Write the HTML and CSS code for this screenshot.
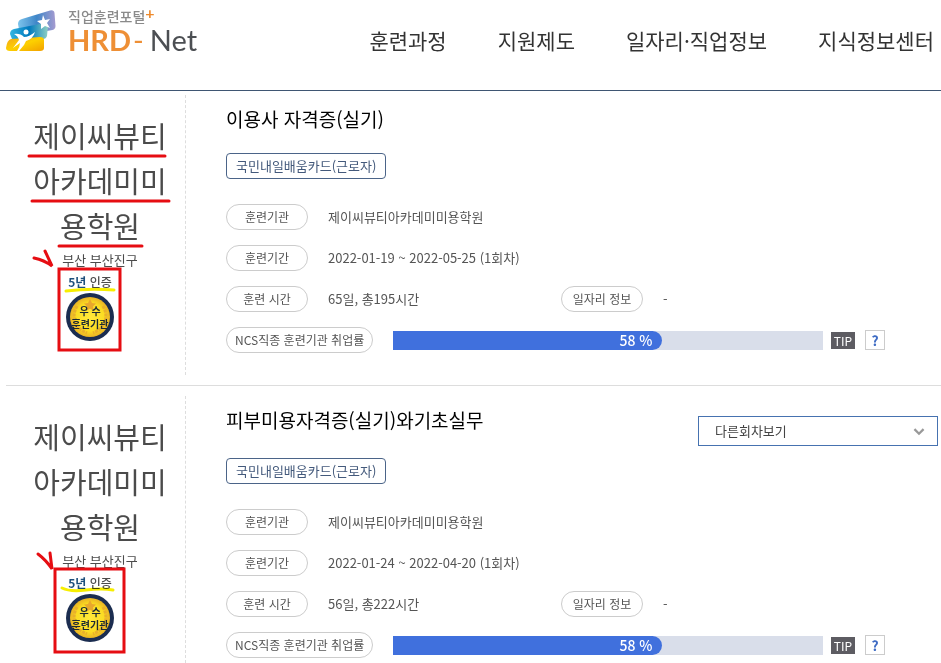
FILE: index.html
```html
<!DOCTYPE html>
<html lang="ko">
<head>
<meta charset="utf-8">
<meta name="viewport" content="width=device-width, initial-scale=1">
<title>직업훈련포털 HRD-Net</title>
<link rel="stylesheet" href="styles.css">
</head>
<body>
<svg class="defs" width="0" height="0" aria-hidden="true">
  <defs>
    <linearGradient id="violet" x1="0" y1="0" x2="1" y2="0"><stop offset="0" stop-color="#7cc4ec"/><stop offset=".5" stop-color="#3f86c8"/><stop offset="1" stop-color="#a59bd0"/></linearGradient>
    <linearGradient id="teal" x1="0" y1="0" x2="1" y2="0"><stop offset="0" stop-color="#35b6e2"/><stop offset=".5" stop-color="#0079bd"/><stop offset="1" stop-color="#8fd0c4"/></linearGradient>
    <linearGradient id="amber" x1="0" y1="0" x2="1" y2="1"><stop offset="0" stop-color="#f3a51c"/><stop offset=".5" stop-color="#fdd000"/><stop offset="1" stop-color="#f2a000"/></linearGradient>
    <radialGradient id="gold"><stop offset="0" stop-color="#ffe93c"/><stop offset=".7" stop-color="#fbdc22"/><stop offset="1" stop-color="#e9b325"/></radialGradient>
    <symbol id="medal" viewBox="0 0 48 48">
      <circle cx="24" cy="24" r="24" fill="#1b2d50"/>
      <circle cx="24" cy="24" r="20" fill="url(#gold)"/>
      <path d="M24 6l2 4 4 .5-3 3 .8 4.200L24 15.800l-3.800 1.900.8-4.200-3-3 4-.5z" fill="#e9a72c"/>
      <g fill="none" stroke="#e8b02c" stroke-width="3" stroke-dasharray="3 1">
        <path d="M11 13C5 23 8 35 21 40"/><path d="M37 13c6 10 3 22-10 27"/>
      </g>
    </symbol>
  </defs>
</svg>

<header class="header">
  <a class="logo" href="#" aria-label="직업훈련포털 HRD-Net">
    <svg class="logo-mark" viewBox="0 0 50 42" aria-hidden="true">
      <path d="M16 9L44 .5q4-1 4.500 2.500l1 13q0 3-3 4L18 25q-4 1-4.500-3L12 14q0-4 4-5z" fill="url(#violet)"/>
      <path d="M8 19l31-6q3 0 3 3l-1 10q-1 3-4 3l-27 4q-4 0-4-4l-2-5q0-4 4-5z" fill="url(#teal)"/>
      <path d="M5 29l29-2q4 0 4 3v8q0 3-4 3H4q-4 0-4-3 1-8 5-9z" fill="url(#amber)"/>
      <path d="M37 5l2 5 5-1-3 4 3 5-5-2-4 3 0-5-4-3 5-1z" fill="#fff"/>
      <path d="M8 24q6-1 10 3 5 0 11-5-2 7-9 9l-2 4-5 6h-2q3-4 3-8l-7 5 6-8q-1-4-5-6z" fill="#fff"/>
      <circle cx="20" cy="22" r="2.500" fill="#fff"/>
    </svg>
    <span class="logo-words">
      <span class="logo-sub">직업훈련포털<b>+</b></span>
      <span class="logo-name"><b>HRD</b><i>-</i><span>Net</span></span>
    </span>
  </a>
  <nav class="nav">
    <a href="#">훈련과정</a>
    <a href="#">지원제도</a>
    <a href="#">일자리·직업정보</a>
    <a href="#">지식정보센터</a>
  </nav>
</header>

<main class="list">
  <article class="item">
    <aside class="school">
      <p class="school-name">제이씨뷰티아카데미미용학원</p>
      <p class="school-area">부산 부산진구</p>
      <div class="cert">
        <p class="cert-years"><b>5년</b> 인증</p>
        <div class="medal"><svg viewBox="0 0 48 48" aria-hidden="true"><use href="#medal"/></svg><span>우 수<br>훈련기관</span></div>
      </div>
      <svg class="marks" width="180" height="268" viewBox="0 0 180 268" aria-hidden="true">
        <path class="hilite" d="M60 196q24-3 48-1"/>
        <path d="M23 61h136M26 106h137M53 151h83M28 163q10 2 18 8l-7-15"/>
        <path d="M53 174h61v81H53z"/>
      </svg>
    </aside>
    <section class="detail">
      <div class="head"><h2>이용사 자격증(실기)</h2></div>
      <span class="card-tag">국민내일배움카드(근로자)</span>
      <dl class="facts">
        <div class="fact"><dt>훈련기관</dt><dd>제이씨뷰티아카데미미용학원</dd></div>
        <div class="fact"><dt>훈련기간</dt><dd>2022-01-19 ~ 2022-05-25 (1회차)</dd></div>
        <div class="pair">
          <div class="fact"><dt>훈련 시간</dt><dd>65일, 총195시간</dd></div>
          <div class="fact"><dt>일자리 정보</dt><dd>-</dd></div>
        </div>
        <div class="fact rate">
          <dt>NCS직종 훈련기관 취업률</dt>
          <dd><span class="bar"><span class="fill">58 %</span></span><span class="tip">TIP</span><button class="help" type="button" aria-label="도움말">?</button></dd>
        </div>
      </dl>
    </section>
  </article>

  <article class="item">
    <aside class="school">
      <p class="school-name">제이씨뷰티아카데미미용학원</p>
      <p class="school-area">부산 부산진구</p>
      <div class="cert">
        <p class="cert-years"><b>5년</b> 인증</p>
        <div class="medal"><svg viewBox="0 0 48 48" aria-hidden="true"><use href="#medal"/></svg><span>우 수<br>훈련기관</span></div>
      </div>
      <svg class="marks" width="180" height="268" viewBox="0 0 180 268" aria-hidden="true">
        <path class="hilite" d="M56 192q8 4 24 2t27 0"/>
        <path d="M32 158q8 6 14 15l-2-16"/>
        <path d="M49 173h69v83H49z"/>
      </svg>
    </aside>
    <section class="detail">
      <div class="head">
        <h2>피부미용자격증(실기)와기초실무</h2>
        <div class="select">
          <select aria-label="다른회차보기"><option>다른회차보기</option></select>
          <svg viewBox="0 0 10 7" aria-hidden="true"><path d="M1 1l4 4 4-4"/></svg>
        </div>
      </div>
      <span class="card-tag">국민내일배움카드(근로자)</span>
      <dl class="facts">
        <div class="fact"><dt>훈련기관</dt><dd>제이씨뷰티아카데미미용학원</dd></div>
        <div class="fact"><dt>훈련기간</dt><dd>2022-01-24 ~ 2022-04-20 (1회차)</dd></div>
        <div class="pair">
          <div class="fact"><dt>훈련 시간</dt><dd>56일, 총222시간</dd></div>
          <div class="fact"><dt>일자리 정보</dt><dd>-</dd></div>
        </div>
        <div class="fact rate">
          <dt>NCS직종 훈련기관 취업률</dt>
          <dd><span class="bar"><span class="fill">58 %</span></span><span class="tip">TIP</span><button class="help" type="button" aria-label="도움말">?</button></dd>
        </div>
      </dl>
    </section>
  </article>
</main>
</body>
</html>
```
FILE: styles.css
```css
* { box-sizing: border-box; }
body {
  margin: 0;
  background: #fff;
  color: #555;
  font: 13px/20px "Noto Sans CJK KR", sans-serif;
}
p, h2, dl, dd { margin: 0; }
a { color: inherit; text-decoration: none; }
.defs { position: absolute; }

.header {
  display: flex;
  justify-content: space-between;
  align-items: flex-start;
  height: 91px;
  padding: 8px 7px 0 6px;
  border-bottom: 1px solid #3f5673;
}
.logo { display: flex; gap: 12px; }
.logo-mark { width: 50px; height: 42px; margin-top: 2px; }
.logo-words { display: flex; flex-direction: column; }
.logo-sub { display: flex; font-size: 14px; line-height: 16px; font-weight: 500; color: #8a8a8a; }
.logo-sub b { font: 700 16px/10px Lato, sans-serif; color: #ee8a2c; }
.logo-name { display: flex; font: 29px/32px Lato, sans-serif; color: #4c4f53; }
.logo-name b { font-weight: 700; color: #ee8f35; }
.logo-name i { font-style: normal; color: #ee8f35; padding: 0 6px 0 2px; }
.nav {
  display: flex;
  gap: 51px;
  padding-top: 16px;
  font-size: 21px;
  line-height: 32px;
  color: #333;
  white-space: nowrap;
}

.list { padding: 4px 0 0 6px; }
.item { display: flex; }
.item + .item { margin-top: 10px; padding-top: 10px; border-top: 1px solid #ddd; }

.school {
  position: relative;
  flex: none;
  display: flex;
  flex-direction: column;
  align-items: center;
  width: 180px;
  padding: 18px 0 0 9px;
  border-right: 1px dashed #ddd;
  color: #4b4b4b;
}
.school-name {
  width: 140px;
  font-size: 29px;
  line-height: 45px;
  text-align: center;
  word-break: break-all;
}
.school-area { padding-top: 2px; }
.cert { width: 68px; }
.cert-years { width: 48px; font-size: 12px; line-height: 23px; font-weight: 500; text-align: center; white-space: nowrap; }
.cert-years b { color: #1d4f7c; }
.medal { display: grid; width: 48px; height: 48px; }
.medal svg, .medal span { grid-area: 1 / 1; }
.medal span {
  align-self: center;
  justify-self: center;
  font-size: 10px;
  line-height: 13px;
  font-weight: 700;
  color: #1c2a33;
  text-align: center;
  white-space: nowrap;
}
.marks {
  position: absolute;
  top: 0;
  left: 0;
  fill: none;
  stroke: #e60d12;
  stroke-width: 3;
  stroke-linecap: round;
}
.marks .hilite { stroke: #f7ee00; mix-blend-mode: multiply; }

.detail { flex: 1; min-width: 0; padding: 10px 3px 22px 40px; }
.item:last-child .detail { padding-bottom: 5px; }
.head {
  display: flex;
  justify-content: space-between;
  align-items: flex-start;
  min-height: 36px;
  margin-bottom: 12px;
}
.head h2 { font-size: 19px; line-height: 28px; font-weight: 400; color: #000; }
.select { position: relative; width: 240px; margin-top: 10px; }
.select select {
  display: block;
  width: 100%;
  height: 30px;
  padding: 0 16px;
  border: 1px solid #4672b0;
  border-radius: 0;
  background: #fff;
  color: #444;
  font: inherit;
  appearance: none;
}
.select svg {
  position: absolute;
  top: 12px;
  right: 13px;
  width: 12px;
  height: 8px;
  fill: none;
  stroke: #999;
  stroke-width: 2;
  pointer-events: none;
}
.card-tag {
  display: block;
  width: fit-content;
  padding: 0 9px;
  border: 1px solid #4b6488;
  border-radius: 4px;
  font-size: 13px;
  line-height: 24px;
  color: #43597b;
}
.facts { display: flex; flex-direction: column; gap: 15px; margin-top: 25px; }
.fact { display: flex; align-items: center; gap: 20px; }
.fact dt {
  flex: none;
  min-width: 82px;
  padding: 0 8px;
  border: 1px solid #ccc;
  border-radius: 13px;
  font-size: 12px;
  line-height: 24px;
  text-align: center;
}
.pair { display: grid; grid-template-columns: 335px 1fr; }
.rate dd { flex: 1; display: flex; align-items: center; margin-right: 53px; }
.bar { flex: 1; height: 19px; background: #d9deea; }
.fill {
  display: block;
  width: calc(58% + 19px);
  height: 19px;
  padding-right: 9px;
  border-radius: 0 10px 10px 0;
  background: #4070dd;
  color: #fff;
  font-size: 14px;
  line-height: 19px;
  font-weight: 500;
  text-align: right;
}
.tip {
  width: 24px;
  margin: 0 10px 0 8px;
  background: #5d5c62;
  color: #fff;
  font-size: 12px;
  line-height: 17px;
  font-weight: 400;
  text-align: center;
}
.help {
  width: 20px;
  height: 20px;
  padding: 0;
  border: 1px solid #ccc;
  background: #fff;
  color: #3f6cc4;
  font: 700 14px/18px "Noto Sans CJK KR", sans-serif;
}
```
